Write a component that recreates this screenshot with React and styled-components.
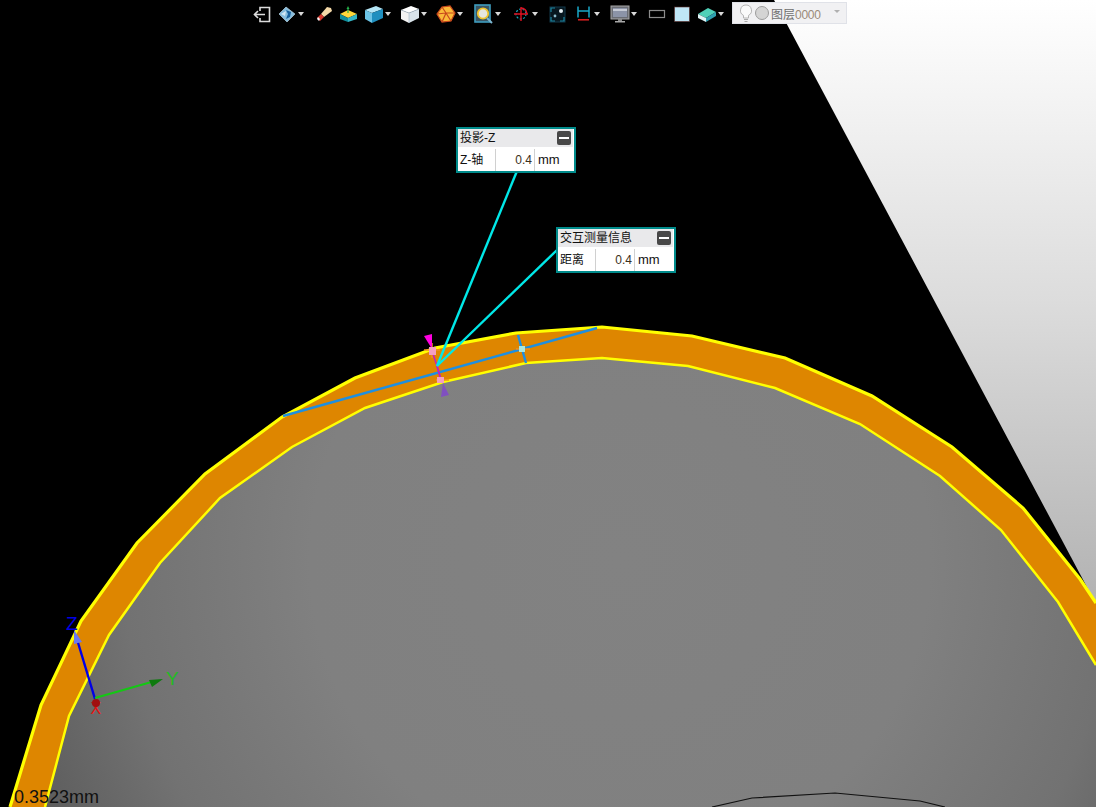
import React from "react";
import styled, { createGlobalStyle } from "styled-components";

const OUTER = [
  [10, 807], [41, 705], [81, 621], [137, 543], [205, 474], [282, 417], [355, 378],
  [435, 348], [516, 333], [602, 327], [692, 336], [785, 358], [872, 396],
  [952, 447], [1023, 508], [1080, 579], [1096, 603],
];
const INNER = [
  [45, 807], [69, 716], [109, 635], [160, 563], [220, 498], [292, 447], [365, 408],
  [443, 382], [526, 363], [602, 358], [688, 366], [775, 388], [860, 424],
  [940, 476], [1001, 530], [1058, 602], [1096, 665],
];
const pts = (list) => list.map((p) => p.join(",")).join(" ");

const Scene = () => (
  <SceneSvg viewBox="0 0 1096 807">
    <defs>
      <linearGradient id="wall" x1="0" y1="0" x2="0" y2="1">
        <stop offset="0" stopColor="#ffffff" />
        <stop offset="0.5" stopColor="#dcdcdc" />
        <stop offset="1" stopColor="#b2b2b2" />
      </linearGradient>
      <radialGradient id="disc" gradientUnits="userSpaceOnUse" cx="620" cy="560" r="620">
        <stop offset="0" stopColor="#828282" />
        <stop offset="0.5" stopColor="#808080" />
        <stop offset="0.8" stopColor="#727272" />
        <stop offset="1" stopColor="#5e5e5e" />
      </radialGradient>
    </defs>
    <polygon points="774,0 1096,0 1096,604" fill="url(#wall)" />
    <polygon points={pts([...OUTER, ...[...INNER].reverse()])} fill="#de8600" />
    <polygon points={`${pts(INNER)} 1096,807`} fill="url(#disc)" />
    <polyline points={pts(OUTER)} fill="none" stroke="#ffff00" strokeWidth="3.2" />
    <polyline points={pts(INNER)} fill="none" stroke="#ffff00" strokeWidth="2.5" />
    <polyline points="712,807 752,798 835,793 920,801 945,807" fill="none" stroke="#111" strokeWidth="1.2" />

    {/* measurement marks */}
    <line x1="283" y1="416" x2="597" y2="328" stroke="#1e8fe0" strokeWidth="2.4" />
    <line x1="518" y1="335" x2="526" y2="363" stroke="#1e8fe0" strokeWidth="2.4" />
    <path d="M516 349H530" stroke="#f09020" strokeWidth="1.5" />
    <rect x="519" y="346" width="6" height="6" fill="#a8e8e0" />
    <line x1="437" y1="366" x2="441" y2="380" stroke="#c020c0" strokeWidth="2" />
    <path d="M432 343V358M424 350H440" stroke="#f09020" strokeWidth="1.5" fill="none" />
    <path d="M432 351L437 366" stroke="#c020c0" strokeWidth="1.5" />
    <path d="M436 380H449" stroke="#f09020" strokeWidth="1.5" />
    <polygon points="424,336 432,334 432,349" fill="#ff00e0" />
    <rect x="429" y="347" width="7" height="8" fill="#f4a0c0" />
    <rect x="437" y="377" width="7" height="6" fill="#f4a0c0" />
    <polygon points="443,383 441,397 449,395" fill="#8050c0" />
    <line x1="437" y1="366" x2="517" y2="171" stroke="#00e8e8" strokeWidth="2.4" />
    <line x1="437" y1="366" x2="557" y2="250" stroke="#00e8e8" strokeWidth="2.4" />

    {/* axes */}
    <line x1="95" y1="699" x2="76" y2="636" stroke="#0000e6" strokeWidth="2.4" />
    <polygon points="74,630 82,642 74,644" fill="#6a78f0" />
    <line x1="95" y1="698" x2="155" y2="681" stroke="#14c814" strokeWidth="2.2" />
    <polygon points="163,679 149,680 152,687" fill="#0e7a0e" />
    <AxisLabel x="66" y="630" fill="#0000e6">Z</AxisLabel>
    <AxisLabel x="166" y="685" fill="#22bb22">Y</AxisLabel>
    <AxisLabel x="90.5" y="714" fill="#e81010" $small>X</AxisLabel>
    <circle cx="96" cy="703" r="4" fill="#a01010" />
  </SceneSvg>
);

/* toolbar drawings, all on a 20x20 grid */
const ICONS = {
  exit: (
    <g fill="none" stroke="#dcdcdc" strokeWidth="1.6">
      <path d="M8 7V3.5H17.5V17.5H8V14" />
      <path d="M13 10.5H2.5M6 7L2.5 10.5L6 14" />
    </g>
  ),
  view: (
    <g>
      <polygon points="9,3 18,10 10,18 2,10" fill="#86bcdc" stroke="#c4e0f0" strokeWidth="0.6" />
      <polygon points="9,6 14,8 13,13 9,15 11,10" fill="#17609c" />
      <polygon points="4,10 9,7 8,12" fill="#d4e8f4" />
    </g>
  ),
  eraser: (
    <g>
      <polygon points="13,3 17,4 18,7 10,13 7,10" fill="#f4d9a8" />
      <polygon points="7,10 10,13 6,17 3,14" fill="#d8372c" />
      <polygon points="4,13 6,15 5,17 3,15" fill="#f3f3f3" />
    </g>
  ),
  extrude: (
    <g>
      <polygon points="1,10 9,6 18,10 9,14" fill="#ffd83a" />
      <polygon points="1,10 9,14 9,18 1,15" fill="#0f8f9c" />
      <polygon points="18,10 9,14 9,18 18,15" fill="#33b5c6" />
      <path d="M9 9V4" stroke="#25b04a" strokeWidth="1.2" />
      <polygon points="9,2 10.5,5 7.5,5" fill="#25b04a" />
    </g>
  ),
  blueCube: (
    <g>
      <polygon points="1,6 12,2 19,5 8,9" fill="#b4e6f6" />
      <polygon points="1,6 8,9 8,19 1,15" fill="#6cc4e6" />
      <polygon points="8,9 19,5 19,14 8,19" fill="#1f8fbf" />
    </g>
  ),
  whiteCube: (
    <g>
      <polygon points="1,6 11,2 19,5 9,9" fill="#ffffff" />
      <polygon points="1,6 9,9 9,19 1,15" fill="#f2f2f2" />
      <polygon points="9,9 19,5 19,14 9,19" fill="#d9e3ea" />
      <path d="M9 9V19M9 9L1 6M9 9L19 5" stroke="#9fb4c4" strokeWidth="0.6" />
    </g>
  ),
  polygon: (
    <g>
      <polygon points="6,3 14,2 19,9 15,17 6,18 1,10" fill="#fbb93a" stroke="#c8481c" strokeWidth="1.2" />
      <path d="M6 3L10 9L19 9M10 9L15 17M10 9L1 10M10 9L6 18" stroke="#c8481c" strokeWidth="1.2" fill="none" />
    </g>
  ),
  zoom: (
    <g>
      <rect x="1" y="1" width="15" height="17" fill="#3a5664" stroke="#3f9dbf" strokeWidth="1.6" />
      <circle cx="9" cy="9.5" r="5.2" fill="#e6e6e0" stroke="#efc32c" strokeWidth="1.8" />
      <path d="M13 14L18 19" stroke="#7ab4cf" strokeWidth="2" />
    </g>
  ),
  target: (
    <g fill="none">
      <circle cx="10" cy="10" r="5" stroke="#16a0b8" strokeWidth="1.2" strokeDasharray="2 1.5" />
      <path d="M10 4A6 6 0 0 1 16 10" stroke="#e01020" strokeWidth="1.4" />
      <path d="M10 3V17M3 10H17" stroke="#e01020" strokeWidth="1.4" />
    </g>
  ),
  snap: (
    <g>
      <rect x="2" y="3" width="15" height="15" fill="#07171f" stroke="#12394a" strokeWidth="1" />
      <path d="M3 8V4H7M3 13V17H7M12 17H16V13" stroke="#1c86a0" strokeWidth="1.2" fill="none" />
      <circle cx="13" cy="7" r="2" fill="#e4eef2" />
      <circle cx="7" cy="12" r="1.4" fill="#8cbccc" />
    </g>
  ),
  span: (
    <g>
      <path d="M5 2.5V13.5M16 2.5V13.5M5 7H16" stroke="#18a8c8" strokeWidth="1.5" fill="none" />
      <path d="M5 15.8H16" stroke="#e02020" strokeWidth="1.5" />
    </g>
  ),
  monitor: (
    <g>
      <rect x="1" y="2" width="18" height="13" fill="#6a6d74" stroke="#a8a8a8" />
      <rect x="3" y="4" width="14" height="9" fill="#8c94a8" />
      <path d="M3 6H17" stroke="#c6cbd6" strokeWidth="2" />
      <rect x="8" y="15" width="4" height="2" fill="#8a8a8a" />
      <rect x="5" y="17" width="10" height="1.5" fill="#a8a8a8" />
    </g>
  ),
  frame: <rect x="2.5" y="6.5" width="15" height="7" fill="none" stroke="#8c8c8c" strokeWidth="1.2" />,
  fill: <rect x="2.5" y="3" width="15" height="14.5" fill="#bfe6f6" stroke="#5a2c28" strokeWidth="0.6" />,
  layers: (
    <g>
      <polygon points="1,10 11,4 19,8 9,14" fill="#4fd0b8" />
      <polygon points="1,10 9,14 9,18 1,14" fill="#dff3f6" />
      <polygon points="9,14 19,8 19,12 9,18" fill="#2f9fb0" />
    </g>
  ),
};

const TOOLS = [
  { name: "exit", width: 25 },
  { name: "view", width: 37, caret: true },
  { name: "eraser", width: 25 },
  { name: "extrude", width: 25 },
  { name: "blueCube", width: 36, caret: true },
  { name: "whiteCube", width: 36, caret: true },
  { name: "polygon", width: 38, caret: true },
  { name: "zoom", width: 37, caret: true },
  { name: "target", width: 37, caret: true },
  { name: "snap", width: 25 },
  { name: "span", width: 37, caret: true },
  { name: "monitor", width: 37, caret: true },
  { name: "frame", width: 25 },
  { name: "fill", width: 25 },
  { name: "layers", width: 35, caret: true },
];

const Panel = ({ title, label, value, $x, $y }) => (
  <PanelBox $x={$x} $y={$y}>
    <PanelHead>
      <PanelTitle>{title}</PanelTitle>
      <Collapse />
    </PanelHead>
    <PanelRow>
      <LabelCell>{label}</LabelCell>
      <ValueCell>{value}</ValueCell>
      <UnitCell>mm</UnitCell>
    </PanelRow>
  </PanelBox>
);

export default function App() {
  return (
    <Viewport>
      <GlobalStyle />
      <Scene />
      <Toolbar>
        {TOOLS.map((tool) => (
          <Tool key={tool.name} $width={tool.width}>
            <ToolIcon viewBox="0 0 20 20">{ICONS[tool.name]}</ToolIcon>
            {tool.caret && <Caret />}
          </Tool>
        ))}
        <LayerBox>
          <LayerIcon viewBox="0 0 16 20">
            <path
              d="M8 2A5.5 5.5 0 0 0 5.5 12.4V15H10.5V12.4A5.5 5.5 0 0 0 8 2Z"
              fill="#fafafa"
              stroke="#b4b4b4"
            />
            <path d="M6 16.5H10M6.5 18.5H9.5" stroke="#a8a8a8" />
          </LayerIcon>
          <LayerDot />
          <LayerName>
            图层<LayerCode>0000</LayerCode>
          </LayerName>
          <LayerCaret />
        </LayerBox>
      </Toolbar>
      <Panel title="投影-Z" label="Z-轴" value="0.4" $x={456} $y={127} />
      <Panel title="交互测量信息" label="距离" value="0.4" $x={556} $y={227} />
      <Readout>0.3523mm</Readout>
    </Viewport>
  );
}

const CJK = `"Liberation Sans", "Noto Sans CJK SC", sans-serif`;

const GlobalStyle = createGlobalStyle`
  html, body {
    margin: 0;
    padding: 0;
    background: #000;
    overflow: hidden;
  }
`;

const Viewport = styled.div`
  position: relative;
  width: 1096px;
  height: 807px;
  overflow: hidden;
  background: #000;
  font-family: ${CJK};
`;

const SceneSvg = styled.svg`
  display: block;
  width: 1096px;
  height: 807px;
`;

const AxisLabel = styled.text`
  font-family: "Liberation Sans", sans-serif;
  font-size: ${(props) => (props.$small ? "16px" : "19px")};
`;

const Toolbar = styled.div`
  position: absolute;
  top: 0;
  left: 252px;
  height: 27px;
  display: flex;
  align-items: center;
`;

const Tool = styled.div`
  width: ${(props) => props.$width}px;
  display: flex;
  align-items: center;
  flex: none;
`;

const ToolIcon = styled.svg`
  width: 20px;
  height: 20px;
  flex: none;
`;

const Caret = styled.span`
  margin-left: 1px;
  width: 0;
  height: 0;
  border-left: 3.5px solid transparent;
  border-right: 3.5px solid transparent;
  border-top: 4px solid #d8d8d8;
`;

const LayerBox = styled.div`
  box-sizing: border-box;
  width: 115px;
  height: 22px;
  align-self: flex-start;
  margin-top: 2px;
  display: flex;
  align-items: center;
  padding: 0 5px;
  background: #f1f1f3;
  border: 1px solid #e0e2e8;
  position: relative;
`;

const LayerIcon = styled.svg`
  width: 16px;
  height: 20px;
  flex: none;
`;

const LayerDot = styled.span`
  box-sizing: border-box;
  width: 14px;
  height: 14px;
  margin-left: 1px;
  border-radius: 50%;
  background: #d4d4d4;
  border: 1px solid #9c9c9c;
  flex: none;
`;

const LayerName = styled.span`
  margin-left: 2px;
  font-size: 12px;
  color: #6e6e6e;
`;

const LayerCode = styled.span`
  color: #9a8a78;
  letter-spacing: -0.3px;
`;

const LayerCaret = styled.span`
  position: absolute;
  right: 6px;
  top: 7px;
  width: 0;
  height: 0;
  border-left: 3px solid transparent;
  border-right: 3px solid transparent;
  border-top: 3px solid #b0b0b0;
`;

const PanelBox = styled.div`
  position: absolute;
  left: ${(props) => props.$x}px;
  top: ${(props) => props.$y}px;
  box-sizing: border-box;
  width: 120px;
  height: 46px;
  background: #fff;
  border: 2px solid #008b8b;
  font-size: 12px;
  color: #111;
`;

const PanelHead = styled.div`
  height: 18px;
  margin-right: 1px;
  padding: 0 1px 0 2px;
  display: flex;
  align-items: center;
  justify-content: space-between;
  background: #e9e9eb;
`;

const PanelTitle = styled.span`
  line-height: 16px;
`;

const Collapse = styled.span`
  position: relative;
  width: 14px;
  height: 14px;
  margin-right: 1px;
  border-radius: 2px;
  background: #484848;

  &::after {
    content: "";
    position: absolute;
    left: 2px;
    top: 6px;
    width: 10px;
    height: 2px;
    background: #fff;
  }
`;

const PanelRow = styled.div`
  margin-top: 2px;
  height: 20px;
  display: grid;
  grid-template-columns: 37px 40px 1fr;
  align-items: stretch;
  line-height: 22px;
`;

const LabelCell = styled.div`
  padding-left: 2px;
`;

const ValueCell = styled.div`
  padding-right: 2px;
  text-align: right;
  color: #3a3020;
  border-left: 1px solid #d0d0d0;
  border-right: 1px solid #d0d0d0;
`;

const UnitCell = styled.div`
  padding-left: 3px;
  font-size: 13px;
`;

const Readout = styled.div`
  position: absolute;
  left: 14px;
  bottom: 0;
  font-family: "Liberation Sans", sans-serif;
  font-size: 18px;
  line-height: 20px;
  color: #111;
`;
